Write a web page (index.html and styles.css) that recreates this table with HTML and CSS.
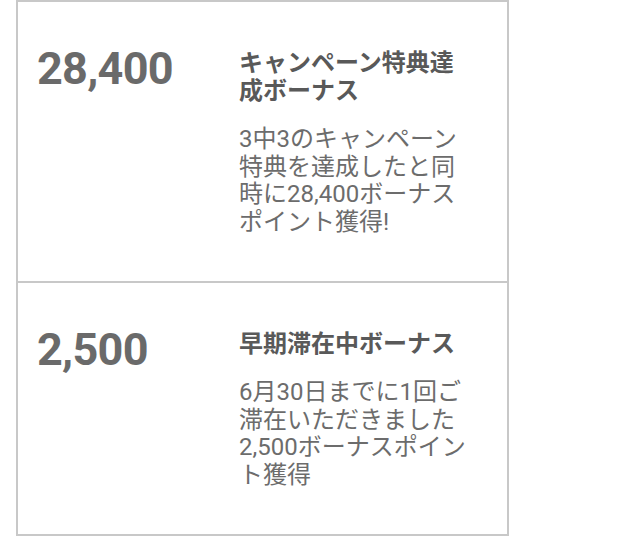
FILE: index.html
```html
<!DOCTYPE html>
<html lang="ja">
<head>
<meta charset="utf-8">
<link rel="stylesheet" href="styles.css">
</head>
<body>
<div class="card">
  <div class="row">
    <div class="points">28,400</div>
    <div class="info">
      <div class="title">キャンペーン特典達成ボーナス</div>
      <div class="desc">3中3のキャンペーン特典を達成したと同時に28,400ボーナスポイント獲得!</div>
    </div>
  </div>
  <div class="row">
    <div class="points">2,500</div>
    <div class="info">
      <div class="title">早期滞在中ボーナス</div>
      <div class="desc">6月30日までに1回ご滞在いただきました2,500ボーナスポイント獲得</div>
    </div>
  </div>
</div>
</body>
</html>
```

FILE: styles.css
```css
html, body {
  margin: 0;
  padding: 0;
  background: #ffffff;
}

body {
  font-family: Roboto, "Noto Sans CJK JP", sans-serif;
}

.card {
  margin-left: 16px;
  width: 489px;
  border: 2px solid #c8c8c8;
}

.row {
  display: grid;
  grid-template-columns: 202px 228px;
  padding: 47px 0 44px 19px;
}

.row + .row {
  border-top: 2px solid #c8c8c8;
}

.points {
  font-size: 45px;
  font-weight: 700;
  line-height: 40px;
  color: #6a6a6a;
  letter-spacing: -0.7px;
}

.title {
  font-size: 24px;
  font-weight: 700;
  line-height: 28px;
  color: #595959;
}

.desc {
  margin-top: 21px;
  font-size: 24px;
  line-height: 27.7px;
  color: #6c6c6c;
}
```
